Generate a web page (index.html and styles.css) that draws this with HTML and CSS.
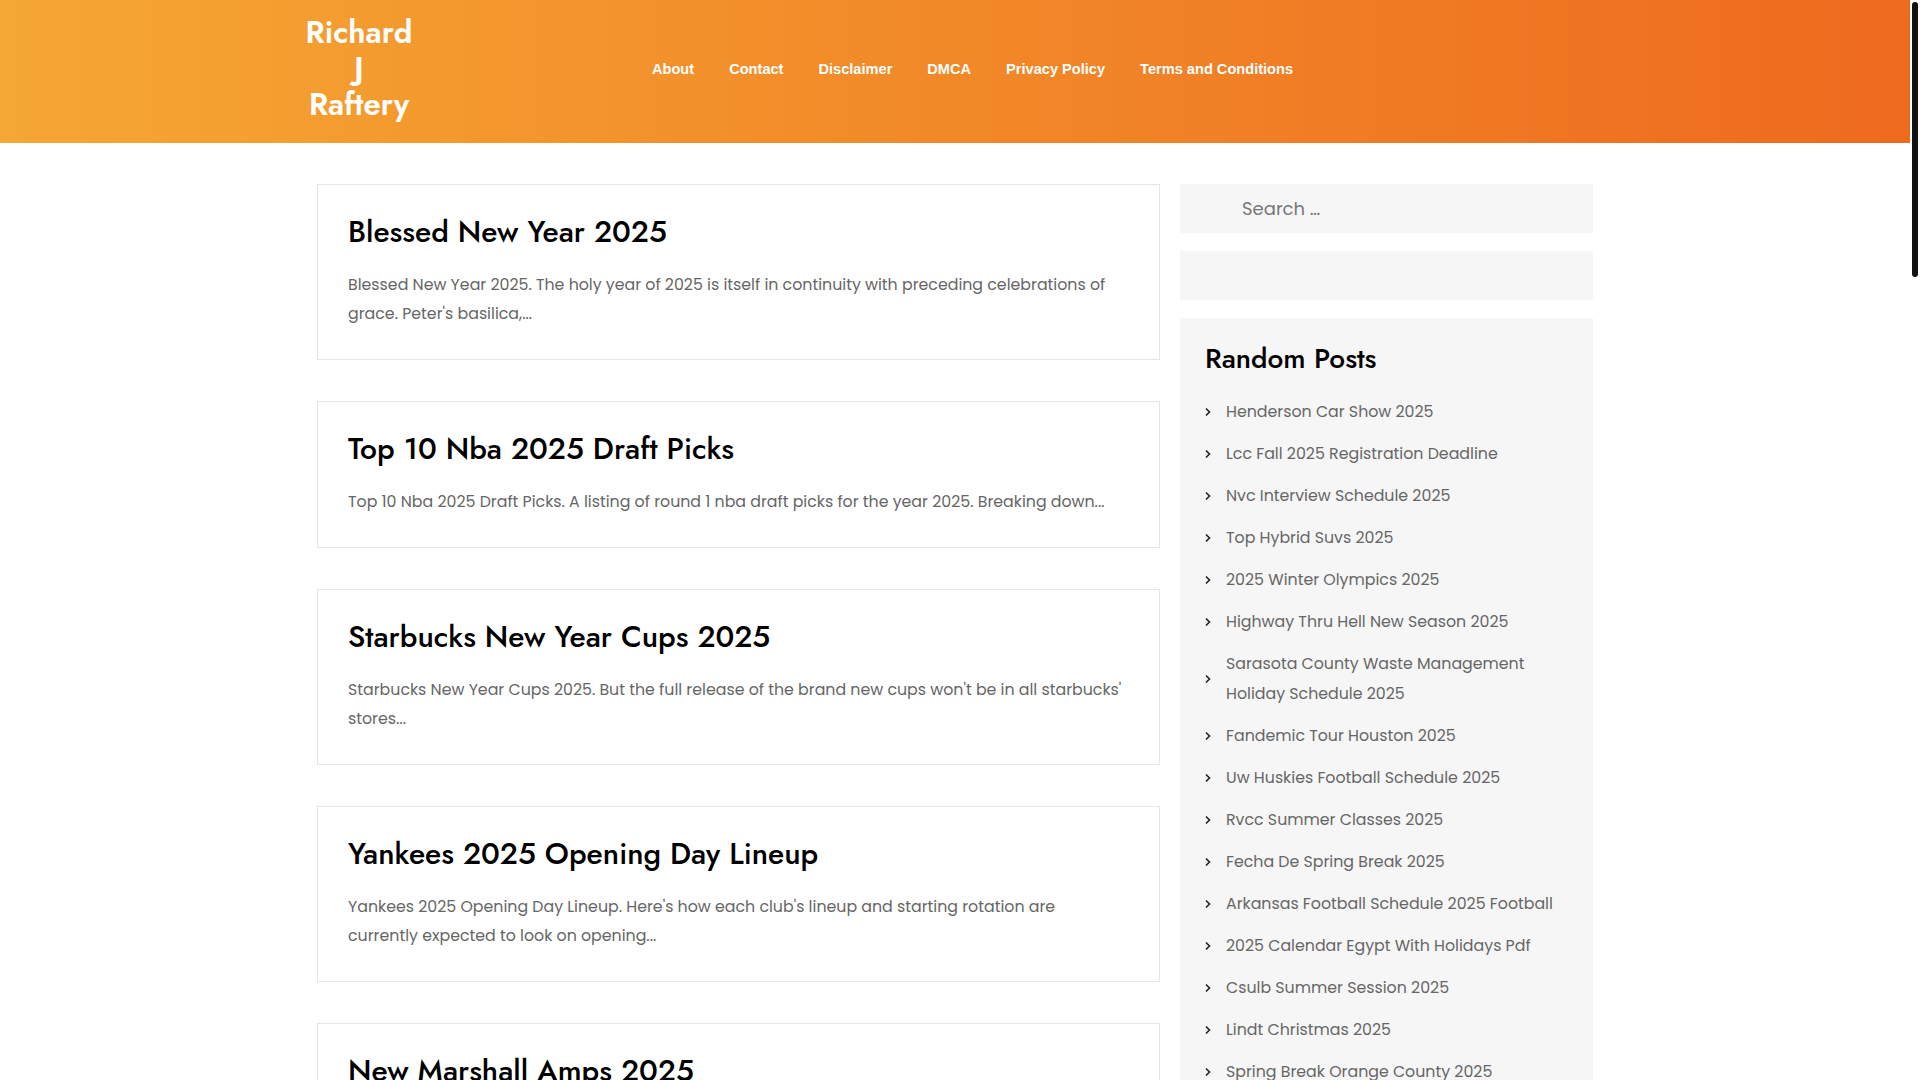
FILE: index.html
```html
<!DOCTYPE html>
<html lang="en">
  <head>
    <meta charset="utf-8" />
    <meta name="viewport" content="width=device-width,initial-scale=1.0" />
    <title>Richard J Raftery</title>
    <link rel="stylesheet" href="styles.css">
  </head>

  <body>
    <header class="site-header">
      <div class="header-inner">
        <p class="site-title"><a href="#">Richard J Raftery</a></p>
        <nav class="main-nav">
          <ul>
            <li><a href="#">About</a></li>
            <li><a href="#">Contact</a></li>
            <li><a href="#">Disclaimer</a></li>
            <li><a href="#">DMCA</a></li>
            <li><a href="#">Privacy Policy</a></li>
            <li><a href="#">Terms and Conditions</a></li>
          </ul>
        </nav>
      </div>
    </header>

    <div class="content-area">
      <main class="site-main">
        <article class="post-card">
          <h2 class="entry-title"><a href="#">Blessed New Year 2025</a></h2>
          <p class="entry-summary">Blessed New Year 2025. The holy year of 2025 is itself in continuity with preceding celebrations of grace. Peter's basilica,...</p>
        </article>
        <article class="post-card">
          <h2 class="entry-title"><a href="#">Top 10 Nba 2025 Draft Picks</a></h2>
          <p class="entry-summary">Top 10 Nba 2025 Draft Picks. A listing of round 1 nba draft picks for the year 2025. Breaking down...</p>
        </article>
        <article class="post-card">
          <h2 class="entry-title"><a href="#">Starbucks New Year Cups 2025</a></h2>
          <p class="entry-summary">Starbucks New Year Cups 2025. But the full release of the brand new cups won't be in all starbucks' stores...</p>
        </article>
        <article class="post-card">
          <h2 class="entry-title"><a href="#">Yankees 2025 Opening Day Lineup</a></h2>
          <p class="entry-summary">Yankees 2025 Opening Day Lineup. Here's how each club's lineup and starting rotation are currently expected to look on opening...</p>
        </article>
        <article class="post-card">
          <h2 class="entry-title"><a href="#">New Marshall Amps 2025</a></h2>
          <p class="entry-summary">New Marshall Amps 2025. The new range brings back classic tones with modern features for players of every level...</p>
        </article>
        <article class="post-card">
          <h2 class="entry-title"><a href="#">Henderson Car Show 2025</a></h2>
          <p class="entry-summary">Henderson Car Show 2025. Classic cars, hot rods and custom builds line the streets for a weekend of...</p>
        </article>
        <article class="post-card">
          <h2 class="entry-title"><a href="#">Lindt Christmas 2025</a></h2>
          <p class="entry-summary">Lindt Christmas 2025. The holiday collection returns with new flavours, gift boxes and advent calendars for the whole family...</p>
        </article>
        <article class="post-card">
          <h2 class="entry-title"><a href="#">Csulb Summer Session 2025</a></h2>
          <p class="entry-summary">Csulb Summer Session 2025. Registration dates, session lengths and course offerings for the summer term...</p>
        </article>
        <article class="post-card">
          <h2 class="entry-title"><a href="#">Top Hybrid Suvs 2025</a></h2>
          <p class="entry-summary">Top Hybrid Suvs 2025. These are the best hybrid suvs you can buy this year, ranked by fuel economy, comfort and value...</p>
        </article>
        <article class="post-card">
          <h2 class="entry-title"><a href="#">Fandemic Tour Houston 2025</a></h2>
          <p class="entry-summary">Fandemic Tour Houston 2025. Celebrities, cosplay contests and exhibitors gather for the biggest fan event of...</p>
        </article>
        <article class="post-card">
          <h2 class="entry-title"><a href="#">Rvcc Summer Classes 2025</a></h2>
          <p class="entry-summary">Rvcc Summer Classes 2025. Find the full schedule of summer courses, start dates and how to enroll online...</p>
        </article>
        <article class="post-card">
          <h2 class="entry-title"><a href="#">Uw Huskies Football Schedule 2025</a></h2>
          <p class="entry-summary">Uw Huskies Football Schedule 2025. The complete list of home and away games for the upcoming season...</p>
        </article>
        <article class="post-card">
          <h2 class="entry-title"><a href="#">2025 Winter Olympics 2025</a></h2>
          <p class="entry-summary">2025 Winter Olympics 2025. Everything you need to know about the host cities, the sports and the athletes...</p>
        </article>
        <article class="post-card">
          <h2 class="entry-title"><a href="#">Nvc Interview Schedule 2025</a></h2>
          <p class="entry-summary">Nvc Interview Schedule 2025. How the national visa center sets interview dates and what to prepare before...</p>
        </article>
        <nav class="pagination">
          <span class="current">1</span>
          <a href="#">2</a>
          <a href="#">3</a>
          <a href="#">Next</a>
        </nav>
      </main>

      <aside class="sidebar">
        <form class="widget search-form" action="">
          <input class="search-field" type="search" placeholder="Search …" />
        </form>
        <div class="widget widget-empty"></div>
        <section class="widget widget-posts">
          <h3 class="widget-title">Random Posts</h3>
          <ul class="post-list">
            <li><svg viewBox="0 0 6 10"><path d="M1 1.5l3.5 3.5L1 8.5" /></svg><a href="#">Henderson Car Show 2025</a></li>
            <li><svg viewBox="0 0 6 10"><path d="M1 1.5l3.5 3.5L1 8.5" /></svg><a href="#">Lcc Fall 2025 Registration Deadline</a></li>
            <li><svg viewBox="0 0 6 10"><path d="M1 1.5l3.5 3.5L1 8.5" /></svg><a href="#">Nvc Interview Schedule 2025</a></li>
            <li><svg viewBox="0 0 6 10"><path d="M1 1.5l3.5 3.5L1 8.5" /></svg><a href="#">Top Hybrid Suvs 2025</a></li>
            <li><svg viewBox="0 0 6 10"><path d="M1 1.5l3.5 3.5L1 8.5" /></svg><a href="#">2025 Winter Olympics 2025</a></li>
            <li><svg viewBox="0 0 6 10"><path d="M1 1.5l3.5 3.5L1 8.5" /></svg><a href="#">Highway Thru Hell New Season 2025</a></li>
            <li><svg viewBox="0 0 6 10"><path d="M1 1.5l3.5 3.5L1 8.5" /></svg><a href="#">Sarasota County Waste Management Holiday Schedule 2025</a></li>
            <li><svg viewBox="0 0 6 10"><path d="M1 1.5l3.5 3.5L1 8.5" /></svg><a href="#">Fandemic Tour Houston 2025</a></li>
            <li><svg viewBox="0 0 6 10"><path d="M1 1.5l3.5 3.5L1 8.5" /></svg><a href="#">Uw Huskies Football Schedule 2025</a></li>
            <li><svg viewBox="0 0 6 10"><path d="M1 1.5l3.5 3.5L1 8.5" /></svg><a href="#">Rvcc Summer Classes 2025</a></li>
            <li><svg viewBox="0 0 6 10"><path d="M1 1.5l3.5 3.5L1 8.5" /></svg><a href="#">Fecha De Spring Break 2025</a></li>
            <li><svg viewBox="0 0 6 10"><path d="M1 1.5l3.5 3.5L1 8.5" /></svg><a href="#">Arkansas Football Schedule 2025 Football</a></li>
            <li><svg viewBox="0 0 6 10"><path d="M1 1.5l3.5 3.5L1 8.5" /></svg><a href="#">2025 Calendar Egypt With Holidays Pdf</a></li>
            <li><svg viewBox="0 0 6 10"><path d="M1 1.5l3.5 3.5L1 8.5" /></svg><a href="#">Csulb Summer Session 2025</a></li>
            <li><svg viewBox="0 0 6 10"><path d="M1 1.5l3.5 3.5L1 8.5" /></svg><a href="#">Lindt Christmas 2025</a></li>
            <li><svg viewBox="0 0 6 10"><path d="M1 1.5l3.5 3.5L1 8.5" /></svg><a href="#">Spring Break Orange County 2025</a></li>
            <li><svg viewBox="0 0 6 10"><path d="M1 1.5l3.5 3.5L1 8.5" /></svg><a href="#">Starbucks New Year Cups 2025</a></li>
            <li><svg viewBox="0 0 6 10"><path d="M1 1.5l3.5 3.5L1 8.5" /></svg><a href="#">Yankees 2025 Opening Day Lineup</a></li>
          </ul>
        </section>
      </aside>
    </div>

    <footer class="site-footer">
      <p>Copyright &copy; 2025 Richard J Raftery</p>
    </footer>

    <!-- the page scrollbar as the browser drew it -->
    <div class="scroll-track" aria-hidden="true"><div class="scroll-thumb"></div></div>
  </body>
</html>
```

FILE: styles.css
```css
* {
  box-sizing: border-box;
}

body {
  margin: 0;
  padding-right: 10px;
  font-family: "Poppins", "DejaVu Sans", sans-serif;
  color: #666;
  background: #fff;
}

a {
  color: inherit;
  text-decoration: none;
}

.scroll-track {
  position: fixed;
  top: 0;
  right: 0;
  bottom: 0;
  width: 10px;
  background: #fff;
}

.scroll-thumb {
  margin: 2px 0 0 2px;
  width: 6px;
  height: 275px;
  border-radius: 3px;
  background: #111;
}

/* header */

.site-header {
  background: linear-gradient(90deg, #f5a733 0%, #ee6a1e 100%);
}

.header-inner {
  width: 1300px;
  margin: 0 auto;
  padding: 15px 0 20px;
  display: flex;
  align-items: center;
}

.site-title {
  width: 108px;
  margin: 0;
  font-family: "Jost", "Lato", sans-serif;
  font-size: 31px;
  font-weight: 600;
  line-height: 36px;
  text-align: center;
  color: #fff;
}

.main-nav ul {
  list-style: none;
  margin: 0 0 2px 239px;
  padding: 0;
  display: flex;
  gap: 35px;
}

.main-nav a {
  font-family: "Liberation Sans", Arial, sans-serif;
  font-size: 14.6px;
  font-weight: 700;
  color: #fff;
}

/* content */

.content-area {
  width: 1276px;
  margin: 41px auto 0;
  display: flex;
  align-items: flex-start;
  gap: 20px;
}

.site-main {
  width: 843px;
  flex: none;
}

.post-card {
  border: 1px solid #e6e6e6;
  padding: 30px 30px 31px;
  margin-bottom: 41px;
}

.entry-title {
  margin: 0 0 21px;
  font-family: "Jost", "Lato", sans-serif;
  font-size: 30px;
  font-weight: 500;
  line-height: 34px;
  color: #000;
}

.entry-summary {
  margin: 0;
  font-size: 15.8px;
  line-height: 29px;
}

.pagination {
  display: flex;
  gap: 10px;
  margin-bottom: 60px;
}

.pagination a,
.pagination span {
  padding: 8px 16px;
  border: 1px solid #e6e6e6;
  font-size: 15px;
}

.pagination .current {
  background: #ee6a1e;
  border-color: #ee6a1e;
  color: #fff;
}

/* sidebar */

.sidebar {
  width: 413px;
  flex: none;
}

.widget {
  background: #f6f6f6;
  margin: 0 0 18px;
}

.search-field {
  display: block;
  width: 100%;
  height: 49px;
  border: none;
  background: transparent;
  padding: 0 20px 0 62px;
  font-family: inherit;
  font-size: 18px;
  color: #666;
}

.search-field::placeholder {
  color: #777;
}

.search-field:focus {
  outline: none;
}

.widget-empty {
  height: 49px;
}

.widget-posts {
  padding: 25px;
}

.widget-title {
  margin: 0 0 16px;
  font-family: "Jost", "Lato", sans-serif;
  font-size: 28px;
  font-weight: 500;
  line-height: 32px;
  color: #000;
}

.post-list {
  list-style: none;
  margin: 0;
  padding: 0;
}

.post-list li {
  display: flex;
  align-items: center;
  padding: 6px 0;
}

.post-list svg {
  flex: none;
  width: 6px;
  height: 10px;
  margin-right: 15px;
  fill: none;
  stroke: #222;
  stroke-width: 1.6;
}

.post-list a {
  font-size: 15.8px;
  line-height: 30px;
  color: #666;
}

/* footer */

.site-footer {
  background: linear-gradient(90deg, #f5a733 0%, #ee6a1e 100%);
  padding: 40px 0;
  text-align: center;
  color: #fff;
  font-size: 15px;
}

.site-footer p {
  margin: 0;
}
```
